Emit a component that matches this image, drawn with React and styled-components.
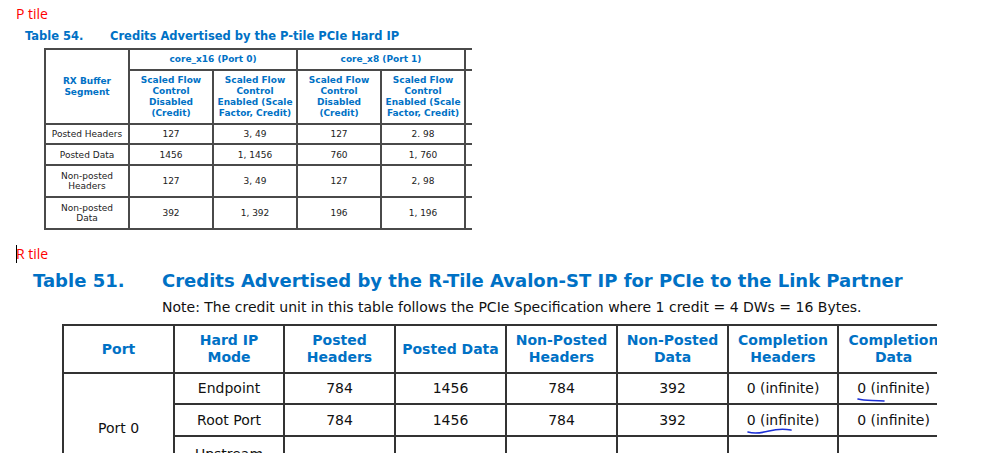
import React from 'react'
import styled, { createGlobalStyle } from 'styled-components'

const GlobalStyle = createGlobalStyle`
  body {
    margin: 0;
    background: #fff;
  }
`

const Page = styled.div`
  width: 999px;
  height: 464px;
  overflow: hidden;
  background: #fff;
  font-family: "DejaVu Sans", Verdana, sans-serif;
`

const TileLabel = styled.div`
  font-family: "Open Sans", "Liberation Sans", sans-serif;
  font-size: 14px;
  line-height: 18px;
  color: #ff0000;
  padding-left: 16px;
  margin-top: ${p => p.$top}px;
  display: flex;
  align-items: center;
`

const Cursor = styled.span`
  width: 1px;
  height: 18px;
  background: #000;
  margin-right: -1px;
`

const Caption = styled.div`
  display: flex;
  align-items: center;
  color: #0071c5;
  font-weight: bold;
  white-space: nowrap;
  font-size: ${p => p.$size}px;
  line-height: ${p => p.$lh}px;
  padding-left: ${p => p.$left}px;
  margin-top: ${p => p.$top}px;
`

const CaptionNum = styled.span`
  width: ${p => p.$w}px;
  flex: none;
`

const Note = styled.div`
  font-size: 14px;
  line-height: 18px;
  color: #111;
  padding-left: 162px;
  margin-top: 6px;
  white-space: nowrap;
`

const Clip = styled.div`
  margin-left: ${p => p.$left}px;
  margin-top: ${p => p.$top}px;
  width: ${p => p.$w}px;
  height: ${p => p.$h}px;
  overflow: hidden;
`

const Grid = styled.table`
  border-collapse: collapse;
  table-layout: fixed;
  text-align: center;
  border-top: 2px solid ${p => p.$line};
  border-left: 2px solid ${p => p.$line};

  td, th {
    border: 2px solid ${p => p.$line};
    padding: 0 2px;
    vertical-align: middle;
    overflow: hidden;
  }
`

const SmallHead = styled.th`
  color: #0071c5;
  font-size: 9px;
  line-height: 11px;
  font-weight: bold;
  height: ${p => p.$h}px;
  white-space: nowrap;
`

const SmallCell = styled.td`
  color: #222;
  font-size: 9px;
  line-height: 10px;
  height: ${p => p.$h}px;
`

const BigHead = styled.th`
  color: #0071c5;
  font-size: 14px;
  line-height: 17px;
  font-weight: bold;
  height: 46px;
`

const BigCell = styled.td`
  position: relative;
  color: #111;
  font-size: 14px;
  line-height: 17px;
  height: ${p => p.$h}px;
  vertical-align: ${p => p.$valign || 'middle'};
`

const Scribble = styled.svg`
  position: absolute;
  left: ${p => p.$x}px;
  top: ${p => p.$y}px;
  overflow: visible;
`

const p54Cols = [84, 84, 84, 84, 84, 84]
const p54Rows = [
  { h: 18, label: 'Posted Headers', vals: ['127', '3, 49', '127', '2. 98'] },
  { h: 19, label: 'Posted Data', vals: ['1456', '1, 1456', '760', '1, 760'] },
  { h: 30, label: <>Non-posted<br />Headers</>, vals: ['127', '3, 49', '127', '2, 98'] },
  { h: 30, label: <>Non-posted<br />Data</>, vals: ['392', '1, 392', '196', '1, 196'] },
]

const scaled = [
  <>Scaled Flow<br />Control<br />Disabled<br />(Credit)</>,
  <>Scaled Flow<br />Control<br />Enabled (Scale<br />Factor, Credit)</>,
]

const r51Cols = [111, 110, 111, 111, 111, 111, 110, 111]
const r51Head = [
  'Port',
  <>Hard IP<br />Mode</>,
  <>Posted<br />Headers</>,
  'Posted Data',
  <>Non-Posted<br />Headers</>,
  <>Non-Posted<br />Data</>,
  <>Completion<br />Headers</>,
  <>Completion<br />Data</>,
]

function PTileTable () {
  return (
    <Clip $left={44} $top={5} $w={428} $h={183}>
      <Grid $line="#4a4a4a" style={{ width: 506 }}>
        <colgroup>
          {p54Cols.map((w, i) => <col key={i} style={{ width: w }} />)}
        </colgroup>
        <thead>
          <tr>
            <SmallHead rowSpan={2}>RX Buffer<br />Segment</SmallHead>
            <SmallHead colSpan={2} $h={19}>core_x16 (Port 0)</SmallHead>
            <SmallHead colSpan={2} $h={19}>core_x8 (Port 1)</SmallHead>
            <SmallHead $h={19}></SmallHead>
          </tr>
          <tr>
            <SmallHead $h={52}>{scaled[0]}</SmallHead>
            <SmallHead $h={52}>{scaled[1]}</SmallHead>
            <SmallHead $h={52}>{scaled[0]}</SmallHead>
            <SmallHead $h={52}>{scaled[1]}</SmallHead>
            <SmallHead $h={52}></SmallHead>
          </tr>
        </thead>
        <tbody>
          {p54Rows.map((row, i) => (
            <tr key={i}>
              <SmallCell $h={row.h}>{row.label}</SmallCell>
              {row.vals.map((v, j) => <SmallCell key={j} $h={row.h}>{v}</SmallCell>)}
              <SmallCell $h={row.h}></SmallCell>
            </tr>
          ))}
        </tbody>
      </Grid>
    </Clip>
  )
}

function RTileTable () {
  return (
    <Clip $left={62} $top={8} $w={875} $h={129}>
      <Grid $line="#333" style={{ width: 888 }}>
        <colgroup>
          {r51Cols.map((w, i) => <col key={i} style={{ width: w }} />)}
        </colgroup>
        <thead>
          <tr>
            {r51Head.map((h, i) => <BigHead key={i}>{h}</BigHead>)}
          </tr>
        </thead>
        <tbody>
          <tr>
            <BigCell rowSpan={3}>Port 0</BigCell>
            <BigCell $h={29}>Endpoint</BigCell>
            <BigCell>784</BigCell>
            <BigCell>1456</BigCell>
            <BigCell>784</BigCell>
            <BigCell>392</BigCell>
            <BigCell>0 (infinite)</BigCell>
            <BigCell>
              0 (infinite)
              <Scribble $x={18} $y={23} width="28" height="6">
                <path d="M1 2 C 8 4, 16 3, 27 4" stroke="#1b2fd6" strokeWidth="1.6" fill="none" strokeLinecap="round" />
              </Scribble>
            </BigCell>
          </tr>
          <tr>
            <BigCell $h={30}>Root Port</BigCell>
            <BigCell>784</BigCell>
            <BigCell>1456</BigCell>
            <BigCell>784</BigCell>
            <BigCell>392</BigCell>
            <BigCell>
              0 (infinite)
              <Scribble $x={18} $y={22} width="46" height="8">
                <path d="M1 5 C 8 7, 14 6, 22 4 C 30 2, 38 2, 44 3" stroke="#1b2fd6" strokeWidth="1.6" fill="none" strokeLinecap="round" />
              </Scribble>
            </BigCell>
            <BigCell>0 (infinite)</BigCell>
          </tr>
          <tr>
            <BigCell $h={38} $valign="top" style={{ paddingTop: 7 }}>Upstream<br />Port</BigCell>
            <BigCell></BigCell>
            <BigCell></BigCell>
            <BigCell></BigCell>
            <BigCell></BigCell>
            <BigCell></BigCell>
            <BigCell></BigCell>
          </tr>
        </tbody>
      </Grid>
    </Clip>
  )
}

export default function App () {
  return (
    <Page>
      <GlobalStyle />
      <TileLabel $top={5}>P tile</TileLabel>
      <Caption $size={11.5} $lh={14} $left={25} $top={6}>
        <CaptionNum $w={85}>Table 54.</CaptionNum>
        Credits Advertised by the P-tile PCIe Hard IP
      </Caption>
      <PTileTable />
      <TileLabel $top={14}><Cursor />R tile</TileLabel>
      <Caption $size={18} $lh={22} $left={33} $top={7}>
        <CaptionNum $w={129}>Table 51.</CaptionNum>
        Credits Advertised by the R-Tile Avalon-ST IP for PCIe to the Link Partner
      </Caption>
      <Note>Note: The credit unit in this table follows the PCIe Specification where 1 credit = 4 DWs = 16 Bytes.</Note>
      <RTileTable />
    </Page>
  )
}
